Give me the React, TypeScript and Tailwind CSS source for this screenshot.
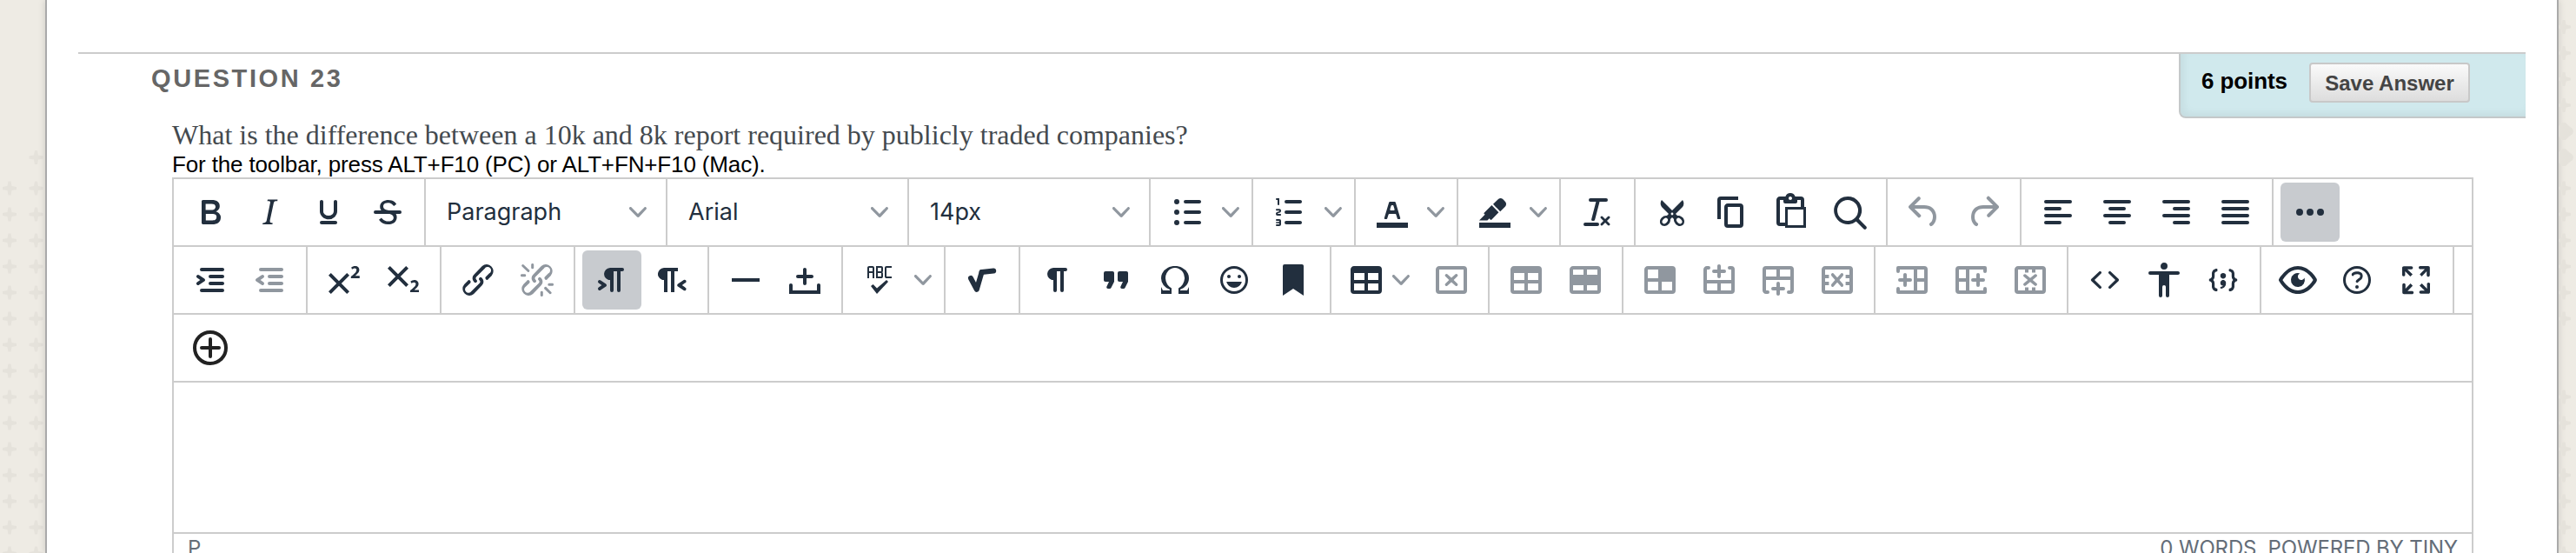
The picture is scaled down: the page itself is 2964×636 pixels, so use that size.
import React from "react";

type Shape = { d: string; tr?: string };

const P: Record<string, string> = {
  bold: "M7.8 19c-.3 0-.5 0-.6-.2l-.2-.5V5.7c0-.2 0-.4.2-.5l.6-.2h5c1.5 0 2.7.3 3.5 1 .7.6 1.1 1.4 1.1 2.5a3 3 0 01-.6 1.9c-.4.6-1 1-1.6 1.2.4.1.9.3 1.3.6s.8.7 1 1.2c.4.4.5 1 .5 1.6 0 1.3-.4 2.3-1.3 3-.8.7-2.1 1-3.8 1H7.8zm5-8.3c.6 0 1.2-.1 1.6-.5.4-.3.6-.7.6-1.3 0-1.1-.8-1.7-2.3-1.7H9.3v3.5h3.4zm.5 6c.7 0 1.3-.1 1.7-.4.4-.4.6-.9.6-1.5s-.2-1-.7-1.4c-.4-.3-1-.4-2-.4H9.4v3.8h4z",
  italic: "M16.7 4.7l-.1.9h-.3c-.6 0-1 0-1.4.3-.3.3-.4.6-.5 1.1l-2.1 9.8v.6c0 .5.4.8 1.4.8h.2l-.2.8H8l.2-.8h.2c1.1 0 1.8-.5 2-1.5l2-9.8.1-.5c0-.6-.4-.8-1.4-.8h-.3l.2-.9h5.8z",
  underline: "M16 5c.6 0 1 .4 1 1v5.5a4 4 0 01-.4 1.8l-1 1.4a5.3 5.3 0 01-5.5 1 5 5 0 01-1.6-1c-.5-.4-.8-.9-1.1-1.4a4 4 0 01-.4-1.8V6c0-.6.4-1 1-1s1 .4 1 1v5.5c0 .3 0 .6.2 1l.6.7a3.3 3.3 0 002.2.8 3.4 3.4 0 002.2-.8c.3-.2.4-.5.6-.8l.2-.9V6c0-.6.4-1 1-1zM8 17h8c.6 0 1 .4 1 1s-.4 1-1 1H8a1 1 0 010-2z",
  strike: "M15.6 8.5c-.5-.7-1-1.1-1.3-1.3-.6-.4-1.3-.6-2-.6-2.7 0-2.8 1.7-2.8 2.1 0 1.6 1.8 2 3.2 2.3 4.4.9 4.6 2.8 4.6 3.9 0 1.4-.7 4.1-5 4.1A6.2 6.2 0 017 16.4l1.5-1.1c.4.6 1.6 2 3.7 2 1.6 0 2.5-.4 3-1.2.4-.8.3-2-.8-2.6-.7-.4-1.6-.7-2.9-1-1-.2-3.9-.8-3.9-3.6C7.6 6 10.3 5 12.4 5c2.9 0 4.2 1.6 4.7 2.4l-1.5 1.1z",
  strikeBar: "M5 11h14a1 1 0 010 2H5a1 1 0 010-2z",
  chevron: "M8.7 2.2c.3-.3.8-.3 1 0 .4.4.4.9 0 1.2L5.7 7.8c-.3.3-.9.3-1.2 0L.2 3.4a.8.8 0 010-1.2c.3-.3.8-.3 1.1 0L5 6l3.7-3.8z",
  indent: "M7 5h12c.6 0 1 .4 1 1s-.4 1-1 1H7a1 1 0 110-2zm5 4h7c.6 0 1 .4 1 1s-.4 1-1 1h-7a1 1 0 010-2zm0 4h7c.6 0 1 .4 1 1s-.4 1-1 1h-7a1 1 0 010-2zm-5 4h12a1 1 0 010 2H7a1 1 0 010-2zm-2.6-3.8L6.2 12l-1.8-1.2a1 1 0 011.2-1.6l3 2a1 1 0 010 1.6l-3 2a1 1 0 11-1.2-1.6z",
  outdent: "M7 5h12c.6 0 1 .4 1 1s-.4 1-1 1H7a1 1 0 110-2zm5 4h7c.6 0 1 .4 1 1s-.4 1-1 1h-7a1 1 0 010-2zm0 4h7c.6 0 1 .4 1 1s-.4 1-1 1h-7a1 1 0 010-2zm-5 4h12a1 1 0 010 2H7a1 1 0 010-2zm1.6-3.8a1 1 0 01-1.2 1.6l-3-2a1 1 0 010-1.6l3-2a1 1 0 011.2 1.6L6.8 12l1.8 1.2z",
  sup: "M15 9.4L10.4 14l4.6 4.6-1.4 1.4L9 15.4 4.4 20 3 18.6 7.6 14 3 9.4 4.4 8 9 12.6 13.6 8 15 9.4zm5.9 1.6h-5v-1l1-.8 1.7-1.6c.3-.5.5-.9.5-1.3 0-.3 0-.5-.2-.7-.2-.2-.5-.3-.9-.3l-.8.2-.7.4-.4-1.2c.2-.2.5-.4 1-.5.3-.2.8-.2 1.2-.2.8 0 1.4.2 1.8.6.4.4.6 1 .6 1.6 0 .5-.2 1-.5 1.5l-1.3 1.4-.6.5h2.6V11z",
  sub: "M10.4 10l4.6 4.6-1.4 1.4L9 11.4 4.4 16 3 14.6 7.6 10 3 5.4 4.4 4 9 8.6 13.6 4 15 5.4 10.4 10zM21 19h-5v-1l1-.8 1.7-1.6c.3-.4.5-.8.5-1.2 0-.3 0-.6-.2-.7-.2-.2-.5-.3-.9-.3a2 2 0 00-.8.2l-.7.3-.4-1.1 1-.6 1.2-.2c.8 0 1.4.3 1.8.7.4.4.6.9.6 1.5s-.2 1.1-.5 1.6a8 8 0 01-1.3 1.3l-.6.6h2.6V19z",
  link: "M6.2 12.3a1 1 0 011.4 1.4l-2.1 2a2 2 0 102.7 2.8l4.8-4.8a1 1 0 000-1.4 1 1 0 111.4-1.3 2.9 2.9 0 010 4L9.6 20a3.9 3.9 0 01-5.5-5.5l2-2zm11.6-.6a1 1 0 01-1.4-1.4l2-2a2 2 0 10-2.6-2.8L11 10.3a1 1 0 000 1.4A1 1 0 119.6 13a2.9 2.9 0 010-4L14.4 4a3.9 3.9 0 015.5 5.5l-2 2z",
  unlinkRays: "M7.6 6.3a.8.8 0 01-1 1.1L3.3 4.2a.7.7 0 111-1l3.2 3.1zM5.1 8.6a.8.8 0 010 1.5H3a.8.8 0 010-1.5H5zm5-3.5a.8.8 0 01-1.5 0V3a.8.8 0 011.5 0V5zm6 11.8a.8.8 0 011-1l3.2 3.2a.8.8 0 01-1 1L16 17zm-2.2 2a.8.8 0 011.5 0V21a.8.8 0 01-1.5 0V19zm5-3.5a.7.7 0 110-1.5H21a.8.8 0 010 1.5H19z",
  ltr: "M11 5h7a1 1 0 010 2h-1v11a1 1 0 01-2 0V7h-2v11a1 1 0 01-2 0v-6c-.5 0-1 0-1.4-.3A3.4 3.4 0 017.8 10a3.3 3.3 0 010-2.8 3.4 3.4 0 011.8-1.8L11 5zM4.4 16.2L6.2 15l-1.8-1.2a1 1 0 011.2-1.6l3 2a1 1 0 010 1.6l-3 2a1 1 0 11-1.2-1.6z",
  rtl: "M8 5h8v2h-2v12h-2V7h-2v12H8v-7c-.5 0-1 0-1.4-.3A3.4 3.4 0 014.8 10a3.3 3.3 0 010-2.8 3.4 3.4 0 011.8-1.8L8 5zm12 11.2a1 1 0 11-1 1.6l-3-2a1 1 0 010-1.6l3-2a1 1 0 111 1.6L18.4 15l1.8 1.2z",
  hr: "M4 11h16v2H4z",
  nonbreaking: "M11 11H8a1 1 0 110-2h3V6c0-.6.4-1 1-1s1 .4 1 1v3h3c.6 0 1 .4 1 1s-.4 1-1 1h-3v3c0 .6-.4 1-1 1a1 1 0 01-1-1v-3zm10 4v5H3v-5c0-.6.4-1 1-1s1 .4 1 1v3h14v-3c0-.6.4-1 1-1s1 .4 1 1z",
  spell: "M6 8v3H5V5c0-.3.1-.5.3-.7.2-.2.4-.3.7-.3h2c.3 0 .5.1.7.3.2.2.3.4.3.7v6H8V8H6zm0-3v2h2V5H6zm13 0h-3v5h3v1h-3a1 1 0 01-.7-.3 1 1 0 01-.3-.7V5c0-.3.1-.5.3-.7.2-.2.4-.3.7-.3h3v1zm-5 1.5l-.1.7c-.1.2-.3.3-.6.3.3 0 .5.1.6.3l.1.7V10c0 .3-.1.5-.3.7a1 1 0 01-.7.3h-3V4h3c.3 0 .5.1.7.3.2.2.3.4.3.7v1.5zM13 10V8h-2v2h2zm0-3V5h-2v2h2zm3 5l1 1-6.5 7L7 15.5l1.3-1 2.2 2.2L16 12z",
  pilcrow: "M10 5h7a1 1 0 010 2h-1v11a1 1 0 01-2 0V7h-2v11a1 1 0 01-2 0v-6c-.5 0-1 0-1.4-.3A3.4 3.4 0 016.8 10a3.3 3.3 0 010-2.8 3.4 3.4 0 011.8-1.8L10 5z",
  quote: "M7.5 17h.9c.4 0 .7-.2.9-.6L11 13V8c0-.6-.4-1-1-1H6a1 1 0 00-1 1v4c0 .6.4 1 1 1h2l-1.3 2.7a1 1 0 00.8 1.3zm8 0h.9c.4 0 .7-.2.9-.6L19 13V8c0-.6-.4-1-1-1h-4a1 1 0 00-1 1v4c0 .6.4 1 1 1h2l-1.3 2.7a1 1 0 00.8 1.3z",
  omega: "M15 18h4l1-2v4h-6v-3.3l1.4-1a6 6 0 001.8-2.9 6.3 6.3 0 00-.1-4.1 5.8 5.8 0 00-3-3.2c-.6-.3-1.3-.5-2.1-.5a5.1 5.1 0 00-3.9 1.8 6.3 6.3 0 00-1.3 6 6.2 6.2 0 001.8 3l1.4.9V20H4v-4l1 2h4v-.5l-2-1L5.4 15A6.5 6.5 0 014 11c0-1 .2-1.9.6-2.7A7 7 0 017.8 5C9.1 4.3 10.5 4 12 4c1.5 0 2.9.3 4.1 1a7 7 0 013.3 3.3c.4.8.6 1.7.6 2.7 0 1.5-.5 2.9-1.4 4L17 16.5l-2 1v.5z",
  emoji: "M9 11c.6 0 1-.4 1-1s-.4-1-1-1a1 1 0 00-1 1c0 .6.4 1 1 1zm6 0c.6 0 1-.4 1-1s-.4-1-1-1a1 1 0 00-1 1c0 .6.4 1 1 1zm-3 5.5c2.1 0 4-1.5 4.4-3.5H7.6c.5 2 2.3 3.5 4.4 3.5zM12 4a8 8 0 100 16 8 8 0 000-16zm0 14.5a6.5 6.5 0 110-13 6.5 6.5 0 010 13z",
  bookmark: "M6 4v17l6-4 6 4V4c0-.6-.4-1-1-1H7a1 1 0 00-1 1z",
  table: "M19 4a2 2 0 012 2v12a2 2 0 01-2 2H5a2 2 0 01-2-2V6c0-1.1.9-2 2-2h14zM5 14v4h6v-4H5zm14 0h-6v4h6v-4zm0-6h-6v4h6V8zM5 12h6V8H5v4z",
  rowProps: "M19 4a2 2 0 012 2v12a2 2 0 01-2 2H5a2 2 0 01-2-2V6c0-1.1.9-2 2-2h14zM5 15v3h6v-3H5zm14 0h-6v3h6v-3zm0-9h-6v3h6V6zM5 9h6V6H5v3z",
  cellProps: "M19 4a2 2 0 012 2v12a2 2 0 01-2 2H5a2 2 0 01-2-2V6c0-1.1.9-2 2-2h14zM5 13v5h6v-5H5zm14 0h-6v5h6v-5zM5 11h6V6H5v5z",
  frame: "M19 4a2 2 0 012 2v12a2 2 0 01-2 2H5a2 2 0 01-2-2V6c0-1.1.9-2 2-2h14zM5 6v12h14V6z",
  xMark: "M14.4 8.6a.9.9 0 011.2 1.2L13.3 12l2.3 2.2a.9.9 0 01-1.2 1.2L12 13.2l-2.4 2.2a.9.9 0 01-1.2-1.2l2.3-2.2-2.3-2.2a.9.9 0 011.2-1.2l2.4 2.2z",
  rowAbove: "M6 4a1 1 0 010 2H5v6h14V6h-1a1 1 0 010-2h1a2 2 0 012 2v12a2 2 0 01-2 2H5a2 2 0 01-2-2V6c0-1.1.9-2 2-2h1zm5 10H5v4h6v-4zm8 0h-6v4h6v-4zM12 3c.6 0 1 .4 1 1v2h2a1 1 0 010 2h-2v2a1 1 0 01-2 0V8H9a1 1 0 010-2h2V4c0-.6.4-1 1-1z",
  rowTicks: "M5 9h2.2v2H5zM5 13h2.2v2H5zM16.8 9H19v2h-2.2zM16.8 13H19v2h-2.2z",
  colBefore: "M19 4a2 2 0 012 2v12a2 2 0 01-2 2H4a1 1 0 01-1-1v-2a1 1 0 012 0v1h8V6H5v1a1 1 0 01-2 0V5a1 1 0 011-1h15zm0 9h-4v5h4v-5zm0-7h-4v5h4V6zM8 8c.6 0 1 .4 1 1v2h2a1 1 0 010 2H9v2a1 1 0 01-2 0v-2H5a1 1 0 010-2h2V9c0-.6.4-1 1-1z",
  colTicks: "M9 6h2v1.8H9zM13 6h2v1.8h-2zM9 16.2h2V18H9zM13 16.2h2V18h-2z",
  listNum: "M10 17h8c.6 0 1 .4 1 1s-.4 1-1 1h-8a1 1 0 010-2zm0-6h8c.6 0 1 .4 1 1s-.4 1-1 1h-8a1 1 0 010-2zm0-6h8c.6 0 1 .4 1 1s-.4 1-1 1h-8a1 1 0 110-2zM6 4v3.5c0 .3-.2.5-.5.5a.5.5 0 01-.5-.5V5h-.5a.5.5 0 010-1H6zm-1 8.8l.2.2h1.3c.3 0 .5.2.5.5s-.2.5-.5.5H4.9a1 1 0 01-.9-1V13c0-.4.3-.8.6-1l1.2-.4.2-.3a.2.2 0 00-.2-.2H4.5a.5.5 0 01-.5-.5c0-.3.2-.5.5-.5h1.6c.5 0 .9.4.9 1v.1c0 .4-.3.8-.6 1l-1.2.4-.2.3zM7 17v2c0 .6-.4 1-1 1H4.5a.5.5 0 010-1h1.2c.2 0 .3-.1.3-.3 0-.2-.1-.3-.3-.3H4.4a.4.4 0 110-.8h1.3c.2 0 .3-.1.3-.3 0-.2-.1-.3-.3-.3H4.5a.5.5 0 110-1H6c.6 0 1 .4 1 1z",
  listBul: "M11 5h8c.6 0 1 .4 1 1s-.4 1-1 1h-8a1 1 0 010-2zm0 6h8c.6 0 1 .4 1 1s-.4 1-1 1h-8a1 1 0 010-2zm0 6h8c.6 0 1 .4 1 1s-.4 1-1 1h-8a1 1 0 010-2zM4.5 6a1.5 1.5 0 103 0 1.5 1.5 0 10-3 0zm0 6a1.5 1.5 0 103 0 1.5 1.5 0 10-3 0zm0 6a1.5 1.5 0 103 0 1.5 1.5 0 10-3 0z",
  colorBar: "M3 18h18v3H3z",
  textColor: "M8.7 16h-.8a.5.5 0 01-.5-.6l2.7-9c.1-.3.3-.4.5-.4h2.8c.2 0 .4.1.5.4l2.7 9a.5.5 0 01-.5.6h-.8a.5.5 0 01-.4-.4l-.7-2.2c0-.3-.3-.4-.5-.4h-3.4c-.2 0-.4.1-.5.4l-.7 2.2c0 .3-.2.4-.4.4zm2.6-7.6l-.6 2a.5.5 0 00.5.6h1.6a.5.5 0 00.5-.6l-.6-2c0-.3-.3-.4-.5-.4h-.4c-.2 0-.4.1-.5.4z",
  highlight: "M7.7 16.7H3l3.3-3.3-.7-.8L10.2 8l4 4.1-4 4.2c-.2.2-.6.2-.8 0l-.6-.7-1.1 1.1zm5-7.5L11 7.4l3-2.9a2 2 0 012.6 0L18 6c.7.7.7 2 0 2.7l-2.9 2.9-1.8-1.8-.5-.6z",
  removeFmt: "M13.2 6a1 1 0 010 .2l-2.6 10a1 1 0 01-1 .8h-.2a.8.8 0 01-.8-1l2.6-10H8a1 1 0 110-2h9a1 1 0 010 2h-3.8zM5 18h7a1 1 0 010 2H5a1 1 0 010-2zm13 1.5L16.5 18 15 19.5a.7.7 0 01-1-1l1.5-1.5-1.5-1.5a.7.7 0 011-1l1.5 1.5 1.5-1.5a.7.7 0 011 1L17.5 17l1.5 1.5a.7.7 0 01-1 1z",
  cut: "M18 15c.6.7 1 1.4 1 2.3 0 .8-.2 1.5-.7 2l-.8.5-1 .2c-.4 0-.8 0-1.2-.3a3.9 3.9 0 01-2.1-2.2c-.2-.5-.3-1-.2-1.5l-1-1-1 1c0 .5 0 1-.2 1.5-.1.5-.4 1-.9 1.4-.3.4-.7.6-1.2.8l-1.2.3c-.4 0-.7 0-1-.2-.3 0-.6-.3-.8-.5-.5-.5-.8-1.2-.7-2 0-.9.4-1.6 1-2.2A3.7 3.7 0 018.6 14H9l1-1-4-4-.5-1a3.3 3.3 0 010-2c0-.4.3-.7.5-1l6 6 6-6 .5 1a3.3 3.3 0 010 2c0 .4-.3.7-.5 1l-4 4 1 1h.5c.4 0 .8 0 1.2.3.5.2.9.4 1.2.7z",
  copy: "M16 3H6a2 2 0 00-2 2v11h2V5h10V3zm1 4a2 2 0 012 2v10a2 2 0 01-2 2h-7a2 2 0 01-2-2V9c0-1.1.9-2 2-2h7zm0 12V9h-7v10h7z",
  paste: "M18 9V5h-2v1c0 .6-.4 1-1 1H9a1 1 0 01-1-1V5H6v13h3V9h9zM9 20H6a2 2 0 01-2-2V5c0-1.1.9-2 2-2h3.2A3 3 0 0112 1a3 3 0 012.8 2H18a2 2 0 012 2v4h1v12H9v-1zm1.5-9.5v9h9v-9h-9zM12 3a1 1 0 00-1 1c0 .5.4 1 1 1s1-.5 1-1-.4-1-1-1z",
  search: "M16 17.3a8 8 0 111.4-1.4l4.3 4.4a1 1 0 01-1.4 1.4l-4.4-4.3zm-5-.3a6 6 0 100-12 6 6 0 000 12z",
  undo: "M6.4 8H12c3.7 0 6.2 2 6.8 5.1.6 2.7-.4 5.6-2.3 6.8a1 1 0 01-1-1.8c1.1-.6 1.8-2.7 1.4-4.6-.5-2.1-2.1-3.5-4.9-3.5H6.4l3.3 3.3a1 1 0 11-1.4 1.4l-5-5a1 1 0 010-1.4l5-5a1 1 0 011.4 1.4L6.4 8z",
  redo: "M17.6 10H12c-2.8 0-4.4 1.4-4.9 3.5-.4 2 .3 4 1.4 4.6a1 1 0 11-1 1.8c-2-1.2-2.9-4.1-2.3-6.8.6-3 3-5.1 6.8-5.1h5.6l-3.3-3.3a1 1 0 111.4-1.4l5 5a1 1 0 010 1.4l-5 5a1 1 0 01-1.4-1.4l3.3-3.3z",
  alignLeft: "M5 5h14a1 1 0 010 2H5a1 1 0 010-2zm0 4h8a1 1 0 010 2H5a1 1 0 010-2zm0 4h14a1 1 0 010 2H5a1 1 0 010-2zm0 4h8a1 1 0 010 2H5a1 1 0 010-2z",
  alignCenter: "M5 5h14a1 1 0 010 2H5a1 1 0 010-2zm3 4h8a1 1 0 010 2H8a1 1 0 010-2zm-3 4h14a1 1 0 010 2H5a1 1 0 010-2zm3 4h8a1 1 0 010 2H8a1 1 0 010-2z",
  alignRight: "M5 5h14a1 1 0 010 2H5a1 1 0 010-2zm6 4h8a1 1 0 010 2h-8a1 1 0 010-2zm-6 4h14a1 1 0 010 2H5a1 1 0 010-2zm6 4h8a1 1 0 010 2h-8a1 1 0 010-2z",
  justify: "M5 5h14a1 1 0 010 2H5a1 1 0 010-2zm0 4h14a1 1 0 010 2H5a1 1 0 010-2zm0 4h14a1 1 0 010 2H5a1 1 0 010-2zm0 4h14a1 1 0 010 2H5a1 1 0 010-2z",
  more: "M6 10a2 2 0 100 4 2 2 0 000-4zm6 0a2 2 0 100 4 2 2 0 000-4zm6 0a2 2 0 100 4 2 2 0 000-4z",
  code: "M9.8 15.7c.3.3.3.8 0 1-.3.4-.9.4-1.2 0l-4.4-4.1a.8.8 0 010-1.2l4.4-4.2c.3-.3.9-.3 1.2 0 .3.3.3.8 0 1.1L6 12l3.8 3.7zM14.2 15.7c-.3.3-.3.8 0 1 .4.4.9.4 1.2 0l4.4-4.1c.3-.3.3-.9 0-1.2l-4.4-4.2a.8.8 0 00-1.2 0c-.3.3-.3.8 0 1.1L18 12l-3.8 3.7z",
  a11y: "M12 2a2 2 0 012 2 2 2 0 01-2 2 2 2 0 01-2-2c0-1.1.9-2 2-2zm8 7h-5v12c0 .6-.4 1-1 1a1 1 0 01-1-1v-5c0-.6-.4-1-1-1a1 1 0 00-1 1v5c0 .6-.4 1-1 1a1 1 0 01-1-1V9H4a1 1 0 110-2h16c.6 0 1 .4 1 1s-.4 1-1 1z",
  codeSample: "M7.1 11a2.8 2.8 0 01-.8 2 2.8 2.8 0 01.8 2v1.7c0 .3.1.6.4.8.2.3.5.4.8.4.3 0 .4.2.4.4v.8c0 .2-.1.4-.4.4-.7 0-1.4-.3-2-.8-.5-.6-.8-1.3-.8-2V15c0-.3-.1-.6-.4-.8-.2-.3-.5-.4-.8-.4a.4.4 0 01-.4-.4v-.8c0-.2.2-.4.4-.4.3 0 .6-.1.8-.4.3-.2.4-.5.4-.8V9.3c0-.7.3-1.4.8-2 .6-.5 1.3-.8 2-.8.3 0 .4.2.4.4v.8c0 .2-.1.4-.4.4-.3 0-.6.1-.8.4-.3.2-.4.5-.4.8V11zm9.8 0V9.3c0-.3-.1-.6-.4-.8-.2-.3-.5-.4-.8-.4a.4.4 0 01-.4-.4V7c0-.2.1-.4.4-.4.7 0 1.4.3 2 .8.5.6.8 1.3.8 2V11c0 .3.1.6.4.8.2.3.5.4.8.4.2 0 .4.2.4.4v.8c0 .2-.2.4-.4.4-.3 0-.6.1-.8.4-.3.2-.4.5-.4.8v1.7c0 .7-.3 1.4-.8 2-.6.5-1.3.8-2 .8a.4.4 0 01-.4-.4v-.8c0-.2.1-.4.4-.4.3 0 .6-.1.8-.4.3-.2.4-.5.4-.8V15a2.8 2.8 0 01.8-2 2.8 2.8 0 01-.8-2zm-3.3-.4c0 .4-.1.8-.5 1.1-.3.3-.7.5-1.1.5-.4 0-.8-.2-1.1-.5-.4-.3-.5-.7-.5-1.1 0-.5.1-.9.5-1.2.3-.3.7-.4 1.1-.4.4 0 .8.1 1.1.4.4.3.5.7.5 1.2zM12 13c.4 0 .8.1 1.1.5.4.3.5.7.5 1.1 0 1-.1 1.6-.5 2a3 3 0 01-1.1 1c-.4.3-.8.4-1.1.4a.5.5 0 01-.5-.5V17a3 3 0 001-.2l.6-.6c-.6 0-1-.2-1.3-.5-.2-.3-.3-.7-.3-1 0-.5.1-1 .5-1.2.3-.4.7-.5 1.1-.5z",
  preview: "M3.5 12.5c.5.8 1.1 1.6 1.8 2.3 2 2 4.2 3.2 6.7 3.2s4.7-1.2 6.7-3.2a16.2 16.2 0 002.1-2.8 15.7 15.7 0 00-2.1-2.8c-2-2-4.2-3.2-6.7-3.2a9.3 9.3 0 00-6.7 3.2A16.2 16.2 0 003.2 12c0 .2.2.3.3.5zm-2.4-1l.7-1.2L4 7.8C6.2 5.4 8.9 4 12 4c3 0 5.8 1.4 8.1 3.8a18.2 18.2 0 012.8 3.7v1l-.7 1.2-2.1 2.5c-2.3 2.4-5 3.8-8.1 3.8-3 0-5.8-1.4-8.1-3.8a18.2 18.2 0 01-2.8-3.7 1 1 0 010-1zm12-3.3a2 2 0 102.7 2.6 4 4 0 11-2.6-2.6z",
  helpRing: "M12 4a8 8 0 100 16 8 8 0 000-16zm0 1.5a6.5 6.5 0 110 13 6.5 6.5 0 010-13z",
  helpMark: "M9.6 9.7a.7.7 0 01-.7-.8c0-1.1 1.5-1.8 3.2-1.8 1.8 0 3.2.8 3.2 2.4 0 1.4-.4 2.1-1.5 2.8-.2 0-.3.1-.3.2a2 2 0 00-.8.8.8.8 0 01-1.4-.6c.3-.7.8-1 1.3-1.5l.4-.2c.7-.4.8-.6.8-1.5 0-.5-.6-.9-1.7-.9-.5 0-1 .1-1.4.3-.2 0-.3.1-.3.2v-.2c0 .4-.4.8-.8.8zM12 15a1 1 0 110 2 1 1 0 010-2z",
  fullscreen: "M15.3 10l-1.2-1.3 2.9-3h-2.3a.9.9 0 110-1.7H19c.5 0 .9.4.9.9v4.4a.9.9 0 11-1.8 0V7l-2.9 3zm0 4l3 3v-2.3a.9.9 0 111.7 0V19c0 .5-.4.9-.9.9h-4.4a.9.9 0 110-1.8H17l-3-2.9 1.3-1.2zM10 15.4l-2.9 3h2.3a.9.9 0 110 1.7H5a.9.9 0 01-.9-.9v-4.4a.9.9 0 111.8 0V17l2.9-3 1.2 1.3zM8.7 10l-3-3v2.3a.9.9 0 01-1.7 0V5c0-.5.4-.9.9-.9h4.4a.9.9 0 010 1.8H7l3 2.9-1.3 1.2z",
};

const s = (k: string, tr?: string): Shape => ({ d: P[k], tr });

const composite: Record<string, Shape[]> = {
  strike: [s("strike"), s("strikeBar")],
  unlink: [s("link"), s("unlinkRays")],
  textColor: [s("colorBar"), s("textColor")],
  highlight: [s("colorBar"), s("highlight")],
  deleteTable: [s("frame"), s("xMark")],
  rowBelow: [s("rowAbove", "matrix(1 0 0 -1 0 24)")],
  deleteRow: [s("frame"), s("rowTicks"), s("xMark", "translate(12 12) scale(.95 1.15) translate(-12 -12)")],
  colAfter: [s("colBefore", "matrix(-1 0 0 1 24 0)")],
  deleteCol: [s("frame"), s("colTicks"), s("xMark", "translate(12 12) scale(1.08 .95) translate(-12 -12)")],
  help: [s("helpRing"), s("helpMark")],
  codeSample: [s("codeSample", "translate(0 -1)")],
};

function Icon({ name }: { name: string }) {
  if (name === "sqrt") {
    return (
      <svg className="h-12 w-12" viewBox="0 0 24 24" fill="none" stroke="currentColor" strokeLinecap="round" strokeLinejoin="round">
        <path strokeWidth="3" d="M5.5 11l3.4 6.4 2.9-9.9" />
        <path strokeWidth="3" d="M11.8 7.5l6.8-.7" />
      </svg>
    );
  }
  const shapes = composite[name] ?? [s(name)];
  return (
    <svg className="h-12 w-12" viewBox="0 0 24 24" fill="currentColor" fillRule="evenodd">
      {shapes.map((x, i) => (
        <path key={i} d={x.d} transform={x.tr} />
      ))}
      {name === "cut" && (
        <g fill="#fff">
          <ellipse cx="7.9" cy="17" rx="1.3" ry="1.9" transform="rotate(42 7.9 17)" />
          <ellipse cx="16.1" cy="17" rx="1.3" ry="1.9" transform="rotate(-42 16.1 17)" />
          <circle cx="12" cy="13" r="0.7" />
        </g>
      )}
    </svg>
  );
}

function Chevron() {
  return (
    <svg className="h-5 w-5 shrink-0 text-[#90979f]" viewBox="0 0 10 10" fill="currentColor">
      <path d={P.chevron} />
    </svg>
  );
}

function Btn({ name, off, on }: { name: string; off?: boolean; on?: boolean }) {
  return (
    <button
      className={
        "flex h-[68px] w-[68px] shrink-0 items-center justify-center rounded-[6px] " +
        (on ? "bg-[#c8cbcf] " : "") +
        (off ? "text-[#90979f]" : "text-[#222f3e]")
      }
    >
      <Icon name={name} />
    </button>
  );
}

function Split({ name }: { name: string }) {
  return (
    <div className="flex h-[68px] w-[100px] shrink-0 items-center">
      <Btn name={name} />
      <span className="flex w-8 justify-center">
        <Chevron />
      </span>
    </div>
  );
}

function Select({ label }: { label: string }) {
  return (
    <button className="flex h-[68px] w-[260px] shrink-0 items-center justify-between pr-[14px] pl-4 font-['Inter',sans-serif] text-[27px] text-[#222f3e]">
      <span className="pt-px">{label}</span>
      <Chevron />
    </button>
  );
}

function Group({ children, last }: { children: React.ReactNode; last?: boolean }) {
  return (
    <div className={"flex h-[76px] shrink-0 items-center px-2 " + (last ? "" : "box-content border-r-2 border-[#cccccc]")}>
      {children}
    </div>
  );
}

const Row = ({ children }: { children: React.ReactNode }) => (
  <div className="flex h-[78px] border-b-2 border-[#cccccc]">{children}</div>
);

function Crosses({ x, ys, fat }: { x: number; ys: number[]; fat?: boolean }) {
  return (
    <g fill="#e5e2db">
      {ys.map((y) => (
        <path
          key={y}
          transform={`translate(${x} ${y})`}
          d={fat ? "M-2-10h4l4 4 4 3 1 3-1 3-4 3-4 4h-4l-4-4-4-3-1-3 1-3 4-3z" : "M-1.5-8h3l1 5.5 5.500 1v3l-5.500 1-1 5.500h-3l-1-5.500-5.500-1v-3l5.500-1z"}
        />
      ))}
    </g>
  );
}

const range = (a: number, n: number) => Array.from({ length: n }, (_, i) => a + i * 30);

export default function App() {
  return (
    <div className="flex h-[636px] w-[2964px] overflow-hidden bg-[#eeebe4] font-['Liberation_Sans',sans-serif]">
      <svg className="h-[636px] w-[52px] shrink-0" viewBox="0 0 52 636">
        <Crosses x={11} ys={range(216.5, 15)} />
        <Crosses x={41.5} ys={[181, ...range(216.5, 15)]} />
      </svg>
      <main className="h-full w-[2892px] shrink-0 border-x-2 border-[#aaaaaa] bg-white pt-[60px] pl-9 shadow-[0_0_8px_rgba(0,0,0,0.15)]">
        <div className="flex h-[136px] w-[2816px] justify-between border-t-2 border-[#cccccc]">
          <div className="pl-[84px]">
            <h3 className="mt-[12px] text-[29px] leading-8 font-bold tracking-[2.6px] text-[#666666]">QUESTION 23</h3>
            <p className="mt-[31px] ml-6 font-['Liberation_Serif',serif] text-[32px] leading-[36px] whitespace-nowrap text-[#444a4f]">
              What is the difference between a 10k and 8k report required by publicly traded companies?
            </p>
            <p className="mt-px ml-6 text-[26px] leading-[30px] tracking-[-0.14px] whitespace-nowrap text-black">
              For the toolbar, press ALT+F10 (PC) or ALT+FN+F10 (Mac).
            </p>
          </div>
          <div className="flex h-[74px] w-[399px] items-start rounded-bl-[8px] border-b-2 border-l-2 border-[#c4c8c9] bg-[#d0e9ed] shadow-[inset_4px_-4px_8px_rgba(0,0,0,0.05)]">
            <span className="mt-[15px] ml-6 w-[124px] text-[26px] leading-8 font-bold tracking-[-0.1px] whitespace-nowrap text-black">6 points</span>
            <button className="mt-[10px] h-[46px] w-[185px] rounded-[4px] border-2 border-[#c8c8c8] bg-linear-to-b from-[#fafafa] to-[#dddddd] text-[24px] leading-[44px] font-bold whitespace-nowrap text-[#444444]">
              Save Answer
            </button>
          </div>
        </div>
        <section className="mt-2 ml-[108px] h-[500px] w-[2648px] border-2 border-[#cccccc]">
          <Row>
            <Group>
              <Btn name="bold" />
              <Btn name="italic" />
              <Btn name="underline" />
              <Btn name="strike" />
            </Group>
            <Group><Select label="Paragraph" /></Group>
            <Group><Select label="Arial" /></Group>
            <Group><Select label="14px" /></Group>
            <Group><Split name="listBul" /></Group>
            <Group><Split name="listNum" /></Group>
            <Group><Split name="textColor" /></Group>
            <Group><Split name="highlight" /></Group>
            <Group><Btn name="removeFmt" /></Group>
            <Group>
              <Btn name="cut" />
              <Btn name="copy" />
              <Btn name="paste" />
              <Btn name="search" />
            </Group>
            <Group>
              <Btn name="undo" off />
              <Btn name="redo" off />
            </Group>
            <Group>
              <Btn name="alignLeft" />
              <Btn name="alignCenter" />
              <Btn name="alignRight" />
              <Btn name="justify" />
            </Group>
            <Group last><Btn name="more" on /></Group>
          </Row>
          <Row>
            <Group>
              <Btn name="indent" />
              <Btn name="outdent" off />
            </Group>
            <Group>
              <Btn name="sup" />
              <Btn name="sub" />
            </Group>
            <Group>
              <Btn name="link" />
              <Btn name="unlink" off />
            </Group>
            <Group>
              <Btn name="ltr" on />
              <Btn name="rtl" />
            </Group>
            <Group>
              <Btn name="hr" />
              <Btn name="nonbreaking" />
            </Group>
            <Group><Split name="spell" /></Group>
            <Group><Btn name="sqrt" /></Group>
            <Group>
              <Btn name="pilcrow" />
              <Btn name="quote" />
              <Btn name="omega" />
              <Btn name="emoji" />
              <Btn name="bookmark" />
            </Group>
            <Group>
              <button className="flex h-[68px] w-24 items-center justify-between pr-[14px] pl-2 text-[#222f3e]">
                <Icon name="table" />
                <Chevron />
              </button>
              <Btn name="deleteTable" off />
            </Group>
            <Group>
              <Btn name="table" off />
              <Btn name="rowProps" off />
            </Group>
            <Group>
              <Btn name="cellProps" off />
              <Btn name="rowAbove" off />
              <Btn name="rowBelow" off />
              <Btn name="deleteRow" off />
            </Group>
            <Group>
              <Btn name="colBefore" off />
              <Btn name="colAfter" off />
              <Btn name="deleteCol" off />
            </Group>
            <Group>
              <Btn name="code" />
              <Btn name="a11y" />
              <Btn name="codeSample" />
            </Group>
            <Group>
              <Btn name="preview" />
              <Btn name="help" />
              <Btn name="fullscreen" />
            </Group>
          </Row>
          <Row>
            <Group last>
              <button className="flex h-[68px] w-[68px] items-center justify-center text-[#222222]">
                <svg className="h-10 w-10" viewBox="0 0 40 40" fill="none" stroke="currentColor" strokeWidth="4" strokeLinecap="round">
                  <circle cx="20" cy="20" r="18" />
                  <path d="M20 10v20M10 20h20" />
                </svg>
              </button>
            </Group>
          </Row>
          <div className="h-[174px] border-b-2 border-[#cccccc]" />
          <div className="flex justify-between pt-px pr-4 pl-4 font-['Inter',sans-serif] text-[24px] leading-8 tracking-[-0.15px] whitespace-pre text-[#646d78]">
            <span>P</span>
            <span>0 WORDS  POWERED BY TINY</span>
          </div>
        </section>
      </main>
      <svg className="h-[636px] w-[20px] shrink-0" viewBox="2944 0 20 636">
        <Crosses x={2950} ys={range(31, 4)} />
        <Crosses x={2950} ys={range(151, 2)} fat />
        <Crosses x={2950} ys={[...range(216.5, 6), ...range(456.5, 7)]} />
      </svg>
    </div>
  );
}
